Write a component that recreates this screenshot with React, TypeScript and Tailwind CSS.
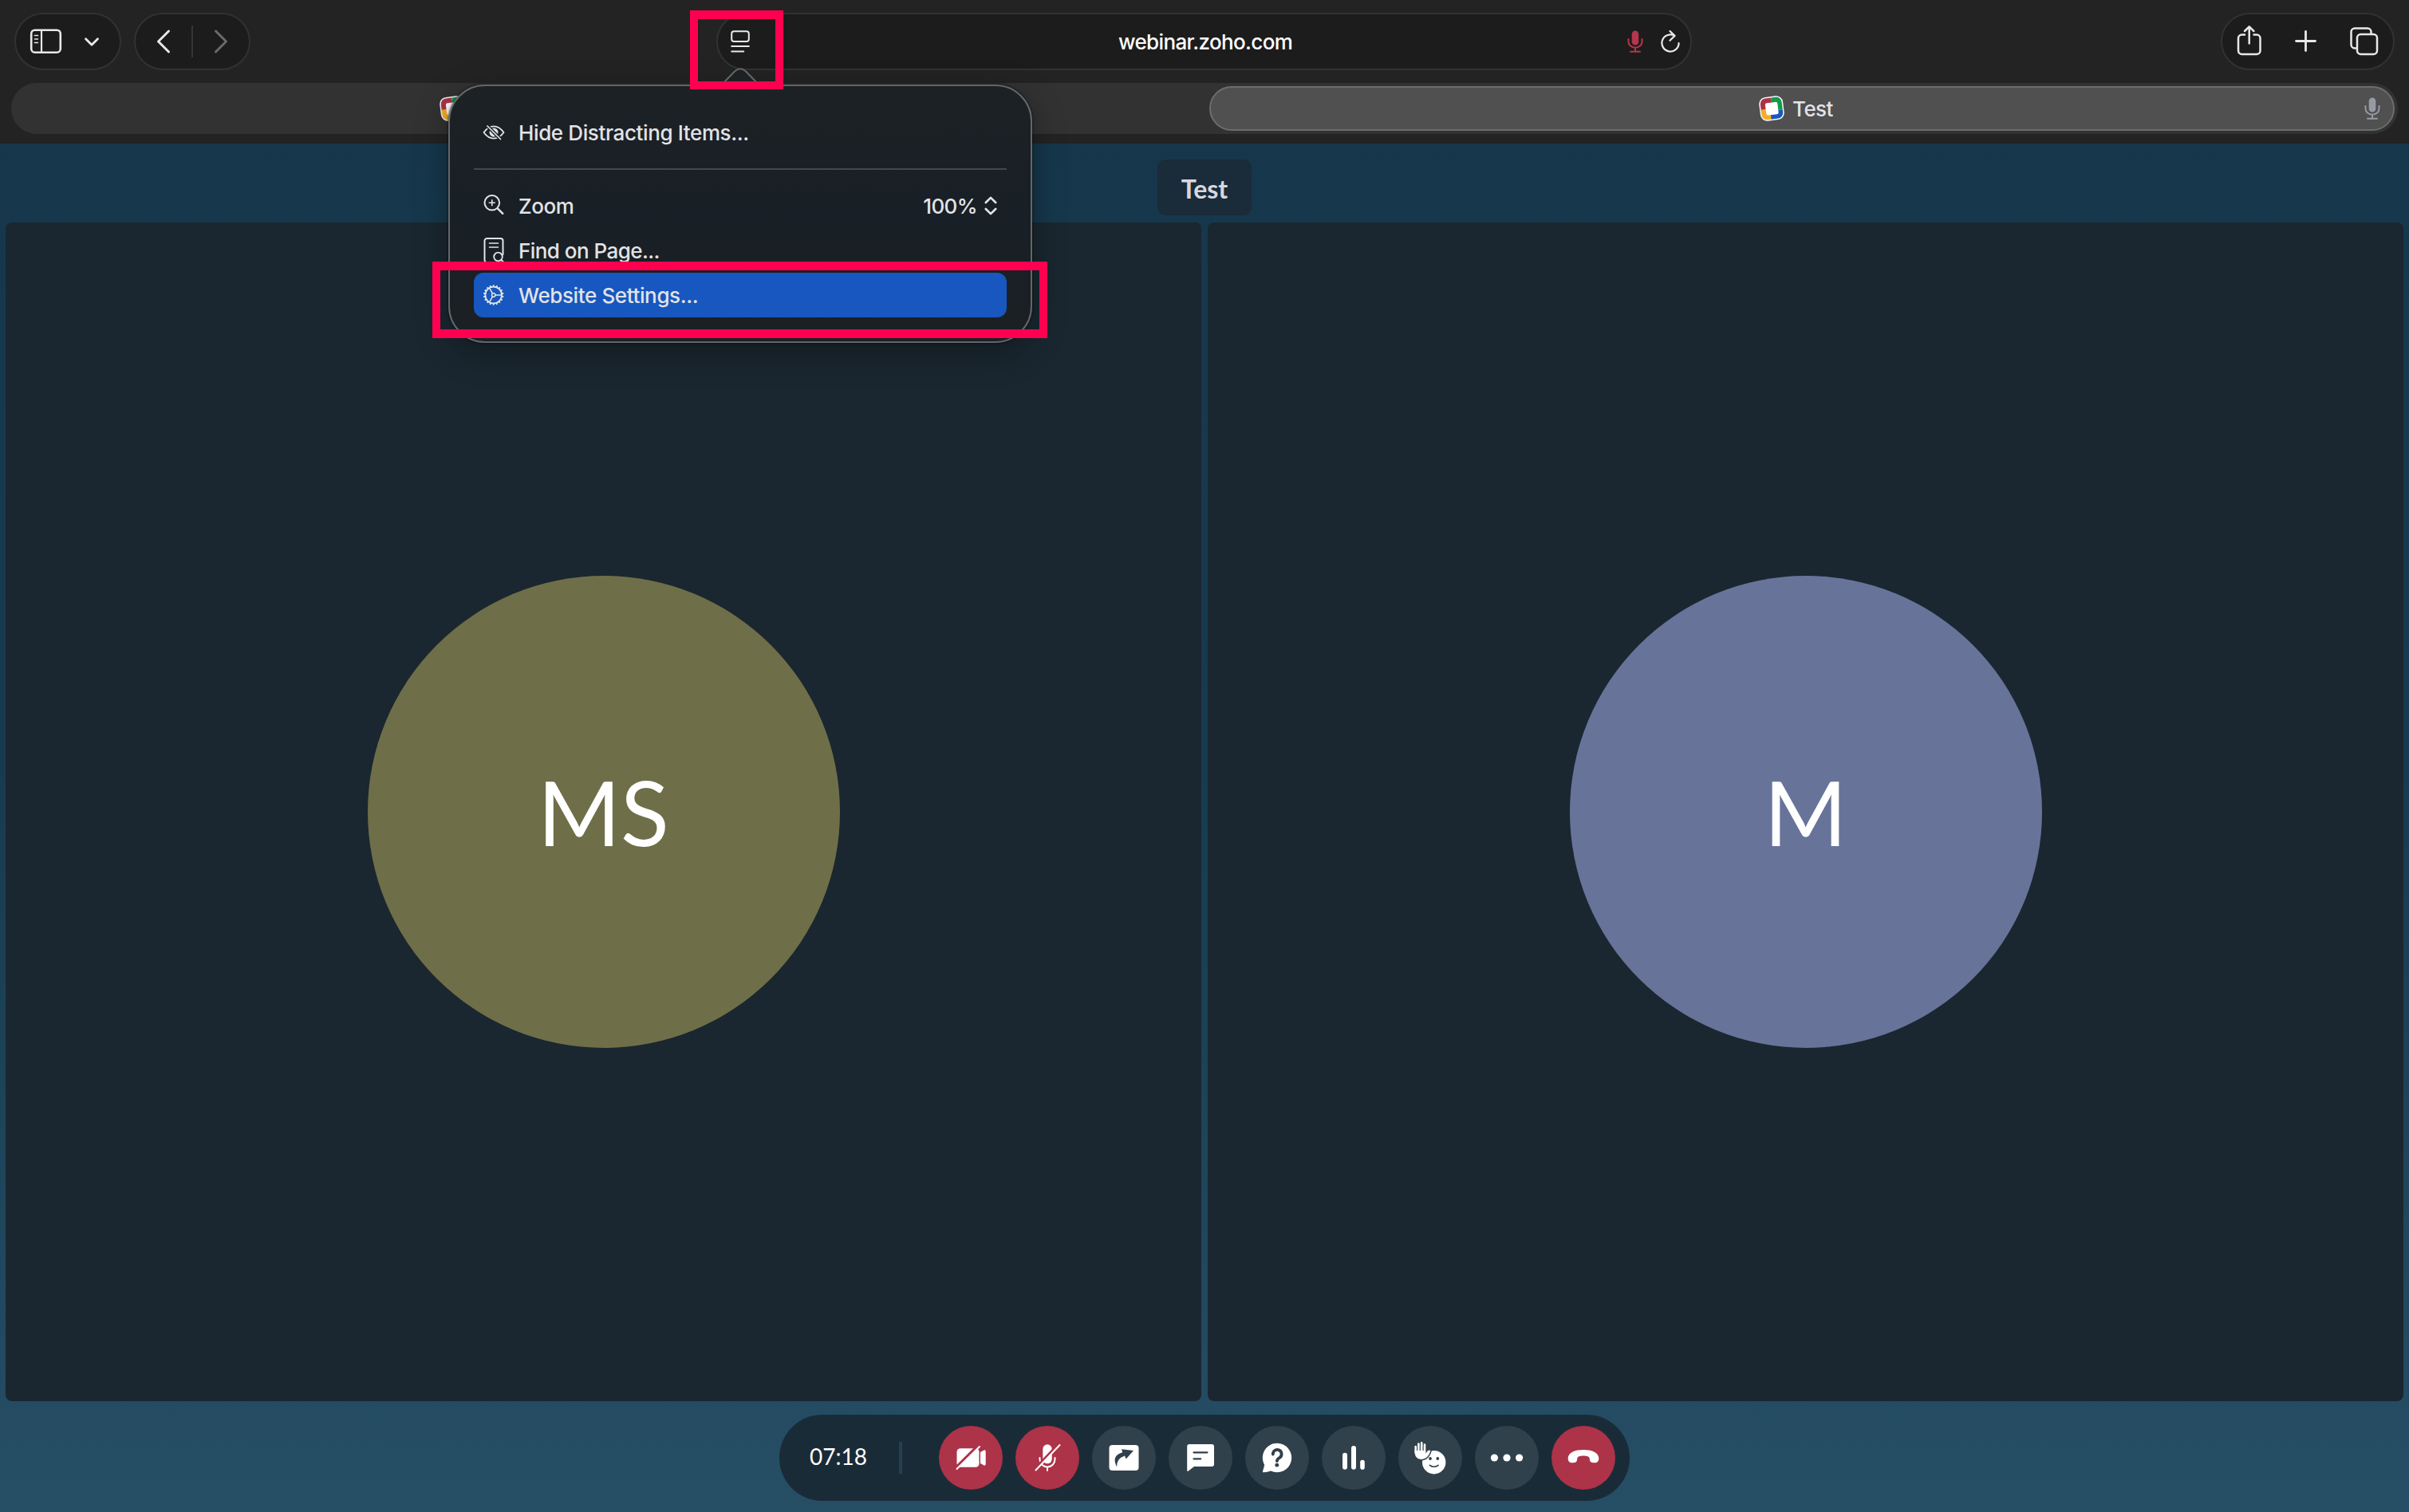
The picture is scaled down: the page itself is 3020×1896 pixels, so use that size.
import type { ReactNode } from "react";

const line = {
  fill: "none",
  stroke: "currentColor",
  strokeLinecap: "round" as const,
  strokeLinejoin: "round" as const,
};

function Pill({ className, children }: { className: string; children: ReactNode }) {
  return (
    <div className={`flex h-[72px] shrink-0 rounded-full border-2 border-[#313233] bg-[#1c1c1c] text-[#e8e8ec] ${className}`}>
      {children}
    </div>
  );
}

function Favicon() {
  return (
    <svg className="size-8 shrink-0" viewBox="0 0 32 32">
      <defs>
        <clipPath id="ring">
          <rect x="2.500" y="2.500" width="27" height="27" rx="7" />
        </clipPath>
      </defs>
      <g transform="rotate(-7 16 16)">
        <rect x="1" y="1" width="30" height="30" rx="8.500" fill="#f4f4f6" />
        <g clipPath="url(#ring)">
          <rect x="2" y="2" width="15" height="15" fill="#ad3348" />
          <rect x="17" y="2" width="13" height="17" fill="#129b4b" />
          <rect x="2" y="16" width="14" height="14" fill="#f5ad27" />
          <rect x="14" y="19" width="16" height="11" fill="#1b57bd" />
        </g>
        <rect x="8.500" y="8.500" width="15.500" height="15.500" rx="2.500" fill="#fff" />
      </g>
    </svg>
  );
}

function Mic({ className }: { className: string }) {
  return (
    <svg className={className} viewBox="0 0 20 28">
      <rect x="5.700" y="0.500" width="8.600" height="18" rx="4.300" fill="currentColor" />
      <path {...line} strokeWidth="2" d="M1.500 11v3.200a8.500 7.500 0 0 0 17 0V11M10 22v4.500M4 26.700h12" />
    </svg>
  );
}

function Header() {
  return (
    <header className="h-[180px] bg-[#232323] font-['Inter',sans-serif] text-[26px] font-medium">
      <div className="flex h-[104px] items-center px-[18px]">
        <Pill className="w-[134px]">
          <svg className="h-[68px] w-[130px]" viewBox="20 18 130 68">
            <g {...line}>
              <rect x="39.200" y="37.700" width="36.600" height="28" rx="4.500" strokeWidth="2.600" />
              <path strokeWidth="2.200" d="M52 38v27.500" />
              <path strokeWidth="1.600" d="M43.500 44.500h4M43.500 49h4M43.500 53.500h4" />
              <path strokeWidth="2.800" d="m107.500 48.800 7.500 7.500 7.500-7.500" />
            </g>
          </svg>
        </Pill>
        <Pill className="ml-4 w-[146px]">
          <svg className="h-[68px] w-[142px]" viewBox="170 18 142 68">
            <g {...line}>
              <path strokeWidth="3" d="m211.500 39-13 13 13 13" />
              <path strokeWidth="2" stroke="#353535" strokeLinecap="butt" d="M241 32v40" />
              <path strokeWidth="3" stroke="#6b6b6d" d="m270.500 39 13 13-13 13" />
            </g>
          </svg>
        </Pill>
        <Pill className="ml-[584px] w-[1223px] items-center">
          <svg className="ml-[16px] h-7 w-6" viewBox="0 0 24 28">
            <g {...line} strokeWidth="2">
              <rect x="1.200" y="1.200" width="21.600" height="12.800" rx="3" />
              <path d="M1.200 20h21.600M1.200 26.500h15" />
            </g>
          </svg>
          <span className="ml-[462px] w-[218px] whitespace-nowrap text-white tracking-[-0.650px]">webinar.zoho.com</span>
          <Mic className="ml-[420px] h-7 w-5 text-[#b5354c]" />
          <svg className="ml-[22px] h-7 w-6" viewBox="0 0 24 28">
            <path {...line} strokeWidth="2.200" d="M17.500 6.900A10.600 10.600 0 1 0 22.600 16M11.500 1l6 5.900-6 5.900" />
          </svg>
        </Pill>
        <Pill className="ml-auto w-[218px]">
          <svg className="h-[68px] w-[214px]" viewBox="2786 18 214 68">
            <g {...line} strokeWidth="2.500">
              <path d="M2814 43.500h-3.500a4.500 4.500 0 0 0-4.500 4.500v15.500a4.500 4.500 0 0 0 4.500 4.500h18.500a4.500 4.500 0 0 0 4.500-4.500V48a4.500 4.500 0 0 0-4.500-4.500h-3.500M2819.700 54.500V33.500M2814 39l5.700-5.700 5.700 5.700" />
              <path strokeWidth="2.800" d="M2878.500 51.500h24M2890.500 39.500v24" />
              <path d="M2954 60.500h-2a4.500 4.500 0 0 1-4.500-4.500V40a4.500 4.500 0 0 1 4.500-4.500h16a4.500 4.500 0 0 1 4.500 4.500v2" />
              <rect x="2955" y="43" width="25" height="25" rx="4.500" />
            </g>
          </svg>
        </Pill>
      </div>
      <nav className="mx-[14px] flex h-16 items-center rounded-full bg-[#323232] pr-1">
        <div className="flex w-[1502px] pl-[537px]">
          <Favicon />
        </div>
        <div className="flex h-14 flex-1 items-center rounded-full border-2 border-[#696e72] bg-[#505050] text-[#e2e3e8]">
          <div className="ml-[687px] flex items-center gap-[10px]">
            <Favicon />
            <span className="tracking-[-0.550px]">Test</span>
          </div>
          <Mic className="mr-[16px] ml-auto h-7 w-5 text-[#959aa5]" />
        </div>
      </nav>
    </header>
  );
}

function Tile({ initials, color }: { initials: string; color: string }) {
  return (
    <section className="flex h-[1478px] flex-1 items-center justify-center rounded-lg bg-[#1a2730]">
      <div className={`flex size-[592px] items-center justify-center rounded-full text-[112px] leading-none text-white ${color}`}>
        {initials}
      </div>
    </section>
  );
}

function RoundButton({ danger = false, children }: { danger?: boolean; children: ReactNode }) {
  return (
    <button className={`size-20 rounded-full ${danger ? "bg-[#ad3348] text-[#ad3348]" : "bg-[#31414b] text-[#31414b]"}`}>
      <svg className="size-20" viewBox="0 0 80 80">
        {children}
      </svg>
    </button>
  );
}

function Toolbar() {
  return (
    <footer className="mx-auto mt-[17px] flex h-[108px] w-[1066px] items-center rounded-full bg-[#1a2b38] pl-[38px] text-white">
      <span className="relative -top-[2px] w-[74px] text-[28px]">07:18</span>
      <div className="mr-[46px] ml-[38px] h-10 w-[4px] bg-[#23404f]" />
      <div className="flex gap-4">
        <RoundButton danger>
          <rect x="22.500" y="28.300" width="28" height="23.400" rx="4.500" fill="#fff" />
          <path fill="#fff" d="M52 33l4.500-2.600q2.200-.6 2.200 1.800v15.600q0 2.400-2.200 1.800L52 47z" />
          <path {...line} strokeWidth="4" strokeLinecap="butt" d="M20.500 53.500 49.500 24.700" />
          <path {...line} stroke="#fff" strokeWidth="2" d="M22.500 54 51 26" />
        </RoundButton>
        <RoundButton danger>
          <rect x="34.300" y="23.300" width="11.400" height="24" rx="5.700" fill="#fff" />
          <path {...line} stroke="#fff" strokeWidth="2" d="M30.500 40v2a9.500 9.500 0 0 0 19 0v-2M40 51.500V56" />
          <path {...line} strokeWidth="4" strokeLinecap="butt" d="M25 54 54 23.500" />
          <path {...line} stroke="#fff" strokeWidth="2" d="M25.500 55.500 55.500 24" />
        </RoundButton>
        <RoundButton>
          <rect x="21.500" y="24" width="37" height="32" rx="4" fill="#fff" />
          <path fill="currentColor" d="M37 29.200 52 31 42.700 41.500 41 37.500Q30.500 41 31.200 51.500 23.500 37.500 38.200 33.200Z" />
        </RoundButton>
        <RoundButton>
          <path fill="#fff" d="M26.500 23h27.500a3 3 0 0 1 3 3v22a3 3 0 0 1-3 3H32l-7.500 5.800q-1.300.5-1.300-1V26a3 3 0 0 1 3.300-3z" />
          <path {...line} strokeWidth="2.200" d="M31.500 33.300h17M31.500 41.300h8.700" />
        </RoundButton>
        <RoundButton>
          <path fill="#fff" d="M40 21.700a18.300 18.300 0 1 1-8 34.800q-5 2-9.500 1.700-1-.2-.5-1.200L24.200 49A18.300 18.300 0 0 1 40 21.700z" />
          <path {...line} strokeWidth="3.800" d="M34.800 35.500a5.400 5.400 0 1 1 8.400 4.300q-3.300 2-3.300 4.200" />
          <circle cx="39.800" cy="49.200" r="2.400" fill="currentColor" />
        </RoundButton>
        <RoundButton>
          <g fill="#fff">
            <rect x="26" y="33.700" width="6" height="21" rx="3" />
            <rect x="37" y="25" width="6" height="29.700" rx="3" />
            <rect x="48.200" y="42.700" width="5.600" height="12" rx="2.800" />
          </g>
        </RoundButton>
        <RoundButton>
          <circle cx="44.700" cy="45.700" r="14.700" fill="#fff" />
          <path
            {...line}
            fill="currentColor"
            strokeWidth="3"
            d="M20.500 31h13v3.500l3.600-3.500q2-1.300 3.200.4-2 6.600-6.300 9.200-4.500 2.400-9.300.3-4.200-2.400-4.200-8.400z"
          />
          <path fill="#fff" d="M20.500 31h13.700v3.500l2.900-3.500q2-1.300 3.200.4-2 6.600-6.300 9.200-4.500 2.400-9.300.3-4.200-2.400-4.200-8.400z" />
          <path {...line} stroke="#fff" strokeWidth="2.600" d="M21.700 33v-7M25.400 32V22.500M29.200 32V21.300M33 33v-9.500" />
          <circle cx="40" cy="41" r="1.900" fill="currentColor" />
          <circle cx="49.300" cy="41" r="1.900" fill="currentColor" />
          <path {...line} strokeWidth="1.600" d="M39.300 49.300q5.400 4 10.800 0" />
        </RoundButton>
        <RoundButton>
          <g fill="#fff">
            <circle cx="24.400" cy="40" r="4.600" />
            <circle cx="40" cy="40" r="4.600" />
            <circle cx="55.600" cy="40" r="4.600" />
          </g>
        </RoundButton>
        <RoundButton danger>
          <path fill="#fff" d="M20.700 40.500C21 33 30 30 40 30s19 3 19.300 10.500c.1 3.800-1.800 5.800-5.300 5.800-4.500 0-6-1.300-6.200-4.800-.1-3.300-3.500-4-7.800-4s-7.700.7-7.800 4c-.2 3.500-1.700 4.800-6.200 4.800-3.500 0-5.400-2-5.300-5.800z" />
        </RoundButton>
      </div>
    </footer>
  );
}

function MenuRow({ icon, label, tracking, active = false, children }: { icon: ReactNode; label: string; tracking: string; active?: boolean; children?: ReactNode }) {
  return (
    <div className={`flex h-14 items-center rounded-xl pr-3 pl-[11px] ${active ? "bg-[#1757bf]" : ""}`}>
      <svg className="h-8 w-7 shrink-0" viewBox="0 0 28 32">
        <g {...line}>{icon}</g>
      </svg>
      <span className={`ml-[17px] flex-1 whitespace-nowrap ${tracking}`}>{label}</span>
      {children}
    </div>
  );
}

const teeth = Array.from({ length: 18 }, (_, i) => i * 20);

function PageMenu() {
  return (
    <div className="absolute top-[106px] left-[562px] h-[324px] w-[732px] rounded-[46px] border-2 border-[#63676a] bg-linear-to-b from-[#1d2124] via-[#181f26] to-[#1c2024] px-[30px] pt-[30px] font-['Inter',sans-serif] text-[26px] font-medium text-[#e2e3e7] shadow-[0_12px_40px_rgba(0,0,0,0.35),0_0_3px_rgba(0,0,0,0.8)]">
      <svg className="absolute -top-[23px] left-[334px] h-6 w-[60px]" viewBox="898 85 60 24">
        <path fill="#1d2124" stroke="#63676a" strokeWidth="2" d="M902 109 921 89.500Q928 83 935 89.500L954 109" />
      </svg>
      <MenuRow
        label="Hide Distracting Items..."
        tracking="tracking-[-0.380px]"
        icon={
          <>
            <path strokeWidth="1.800" d="M1.500 16Q7 8.300 14 8.300T26.500 16Q21 23.700 14 23.700T1.500 16z" />
            <circle cx="14" cy="16" r="5.500" fill="currentColor" stroke="none" />
            <path stroke="#1d2124" strokeWidth="4.500" strokeLinecap="butt" d="M5.500 7.500 22.500 24.500" />
            <path strokeWidth="1.700" d="M6 8 22.500 24.500" />
          </>
        }
      />
      <div className="mt-[17px] mb-[17px] h-[2px] bg-[#414950]" />
      <MenuRow
        label="Zoom"
        tracking="tracking-[-0.450px]"
        icon={
          <>
            <circle cx="11.800" cy="12.300" r="9.300" strokeWidth="2" />
            <path strokeWidth="1.600" d="M8.300 12.300h7M11.800 8.800v7" />
            <path strokeWidth="2.400" d="m18.800 19.300 6.500 6.500" />
          </>
        }
      >
        <span className="tracking-[-0.600px]">100%</span>
        <svg className="ml-[9px] h-6 w-4" viewBox="0 0 16 24">
          <path {...line} strokeWidth="2.600" d="M1.800 8 8 1.800 14.200 8M1.800 16 8 22.200l6.200-6.200" />
        </svg>
      </MenuRow>
      <MenuRow
        label="Find on Page..."
        tracking="tracking-[-0.550px]"
        icon={
          <>
            <path strokeWidth="2" d="M17 31H5.500a3 3 0 0 1-3-3V4a3 3 0 0 1 3-3h17a3 3 0 0 1 3 3v17" />
            <path strokeWidth="1.600" d="M8.500 7h11M8.500 12h11" />
            <circle cx="19.500" cy="24" r="5.300" strokeWidth="1.800" />
            <path strokeWidth="2" d="m23.500 28 3 3" />
          </>
        }
      />
      <MenuRow
        active
        label="Website Settings..."
        tracking="tracking-[-0.380px]"
        icon={
          <>
            <circle cx="13.700" cy="16" r="10.300" strokeWidth="1.800" />
            <circle cx="13.700" cy="16" r="2.200" strokeWidth="1.500" />
            <path strokeWidth="1.500" d="M16 16h8M12.500 14 8.500 7.200M12.500 18l-4 6.800" />
            {teeth.map((a) => (
              <path key={a} strokeWidth="2" strokeLinecap="butt" d="M13.700 5.500V3.300" transform={`rotate(${a} 13.700 16)`} />
            ))}
          </>
        }
      />
    </div>
  );
}

export default function App() {
  return (
    <div className="relative h-[1896px] w-[3020px] overflow-hidden bg-linear-to-b from-[#16374b] from-10% via-[#173a50] via-50% to-[#264e65] font-['Lato',sans-serif]">
      <Header />
      <div className="flex h-[99px] justify-center pt-5">
        <h1 className="flex h-[70px] w-[118px] items-center justify-center rounded-[10px] bg-[#1a2b39] pt-[3px] text-[32px] font-bold text-[#d6d7df]">Test</h1>
      </div>
      <main className="flex gap-2 px-[7px]">
        <Tile initials="MS" color="bg-[#6e6f48]" />
        <Tile initials="M" color="bg-[#68739a]" />
      </main>
      <Toolbar />
      <PageMenu />
      <div className="absolute top-[13px] left-[865px] h-[99px] w-[117px] border-[10px] border-t-[11px] border-[#ff0050]" />
      <div className="absolute top-[328px] left-[542px] h-[96px] w-[771px] border-[10px] border-y-[11px] border-[#ff0050]" />
    </div>
  );
}
